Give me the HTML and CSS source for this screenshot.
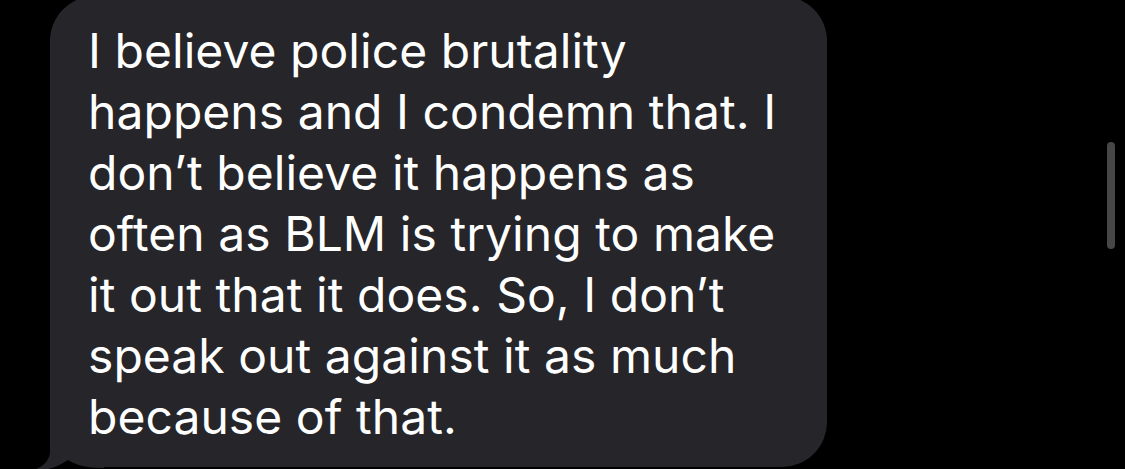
FILE: index.html
```html
<!DOCTYPE html>
<html>
<head>
<meta charset="utf-8">
<link rel="stylesheet" href="styles.css">
</head>
<body>
<div class="thread">
  <div class="bubble">
    <svg class="tail" viewBox="30 412 80 60" width="80" height="60" aria-hidden="true">
      <path d="M50,412 L50,450 C50,460 43,466 31,470 C46,470 58,466 68,459 C76,464 86,467 104,467 L104,412 Z" fill="#262529"/>
    </svg>
    <p class="msg"><span class="line">I believe police brutality</span><span class="line">happens and I condemn that. I</span><span class="line">don’t believe it happens as</span><span class="line">often as BLM is trying to make</span><span class="line">it out that it does. So, I don’t</span><span class="line">speak out against it as much</span><span class="line">because of that.</span></p>
  </div>
  <div class="scrollbar"></div>
</div>
</body>
</html>
```

FILE: styles.css
```css
html, body {
  margin: 0;
  padding: 0;
  background: #000;
  width: 1125px;
  height: 469px;
  overflow: hidden;
}
.thread {
  display: flex;
  padding-left: 50px;
}
.bubble {
  position: relative;
  margin-top: -4px;
  width: 777px;
  box-sizing: border-box;
  padding: 24px 20px 20px 38px;
  background: #262529;
  border-radius: 45px;
}
.msg {
  position: relative;
  margin: 0;
  font-family: Inter, "Noto Sans", sans-serif;
  font-size: 48px;
  line-height: 61px;
  color: #fff;
  letter-spacing: 0.05px;
}
.line {
  display: block;
  white-space: nowrap;
}
.tail {
  position: absolute;
  left: -20px;
  bottom: -6px;
}
.scrollbar {
  position: absolute;
  left: 1107px;
  top: 142px;
  width: 8px;
  height: 107px;
  border-radius: 4px;
  background: #474747;
}
```
